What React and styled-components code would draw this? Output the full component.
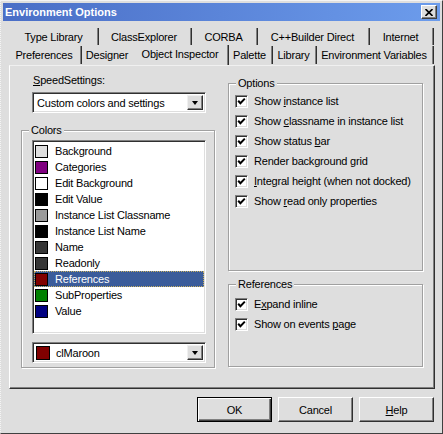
import styled, { createGlobalStyle } from "styled-components";

const GlobalStyle = createGlobalStyle`
  body {
    margin: 0;
    background: #dedede;
  }
  * {
    box-sizing: border-box;
  }
`;

const FACE = "#dedede";

const Window = styled.div`
  width: 443px;
  height: 434px;
  padding: 3px;
  background: ${FACE};
  font-family: "Liberation Sans", Arial, sans-serif;
  font-size: 11px;
  letter-spacing: -0.2px;
  color: #000;
  border-left: 1px dotted #f4f4f4;
  border-top: 1px solid #f4f4f4;
  border-right: 1px solid #404040;
  border-bottom: 1px solid #404040;
  display: flex;
  flex-direction: column;
  overflow: hidden;
`;

const TitleBar = styled.div`
  height: 18px;
  margin: -1px -1px 0 -1px;
  background: linear-gradient(to right, #4a6ec6, #6c9cec);
  display: flex;
  align-items: center;
  justify-content: space-between;
  padding: 0 3px 0 2px;
`;

const Title = styled.span`
  color: #fff;
  font-weight: bold;
  font-size: 11px;
  letter-spacing: 0;
`;

const CloseButton = styled.div`
  width: 16px;
  height: 14px;
  background: ${FACE};
  border-top: 1px solid #fff;
  border-left: 1px solid #fff;
  border-right: 1px solid #404040;
  border-bottom: 1px solid #404040;
  box-shadow: inset -1px -1px 0 #808080;
  display: flex;
  align-items: center;
  justify-content: center;
`;

const TabRows = styled.div`
  margin-top: 7px;
  display: flex;
  flex-direction: column;
`;

const TabRow = styled.div`
  display: flex;
  height: ${(p) => p.$h}px;
  padding-left: ${(p) => p.$indent}px;
`;

const Tab = styled.div`
  width: ${(p) => p.$w}px;
  display: flex;
  align-items: center;
  justify-content: center;
  padding-bottom: ${(p) => (p.$active ? 3 : 0)}px;
  margin-top: ${(p) => (p.$active ? -1 : 0)}px;
  border-right: ${(p) => (p.$sep ? "1px solid #303030" : "none")};
  box-shadow: ${(p) => (p.$sep ? "inset -1px 0 0 #808080" : "none")};
  padding-right: 2px;
  white-space: nowrap;
  margin-bottom: ${(p) => (p.$active ? -1 : 1)}px;
`;

const Page = styled.div`
  margin-left: 5px;
  width: 426px;
  height: 324px;
  border-left: 1px solid #fff;
  border-top: 1px solid #f0f0f0;
  border-right: 1px solid #303030;
  border-bottom: 1px solid #303030;
  box-shadow: inset -1px -1px 0 #808080;
  display: flex;
  gap: 13px;
  padding: 0 0 0 11px;
`;

const LeftColumn = styled.div`
  width: 194px;
  display: flex;
  flex-direction: column;
  padding-top: 8px;
`;

const RightColumn = styled.div`
  width: 195px;
  display: flex;
  flex-direction: column;
  padding-top: 17px;
  gap: 13px;
`;

const FieldLabel = styled.div`
  height: 13px;
  line-height: 13px;
  margin-left: 12px;
`;

const GroupBox = styled.div`
  position: relative;
  height: ${(p) => p.$h}px;
  margin-top: ${(p) => p.$top || 0}px;
  border: 1px solid #a0a0a0;
  box-shadow: 1px 1px 0 #fff, inset 1px 1px 0 #fff;
  padding: ${(p) => p.$pad};
`;

const GroupLegend = styled.span`
  position: absolute;
  top: -7px;
  left: 7px;
  padding: 0 2px;
  background: ${FACE};
  line-height: 13px;
`;

const Sunken = styled.div`
  background: #fff;
  border-top: 1px solid #808080;
  border-left: 1px solid #808080;
  border-right: 1px solid #fff;
  border-bottom: 1px solid #fff;
  box-shadow: inset 1px 1px 0 #303030, inset -1px -1px 0 ${FACE};
`;

const Combo = styled(Sunken)`
  width: 174px;
  height: ${(p) => p.$h}px;
  margin-left: ${(p) => p.$ml || 0}px;
  margin-top: ${(p) => p.$mt || 0}px;
  display: flex;
  align-items: center;
  padding: 2px;
`;

const ComboText = styled.div`
  flex: 1;
  display: flex;
  align-items: center;
  gap: 6px;
  padding-left: ${(p) => p.$pl}px;
`;

const DropButton = styled.div`
  width: 16px;
  height: 100%;
  background: ${FACE};
  border-top: 1px solid #f0f0f0;
  border-left: 1px solid #f0f0f0;
  border-right: 1px solid #303030;
  border-bottom: 1px solid #303030;
  box-shadow: inset -1px -1px 0 #808080;
  display: flex;
  align-items: center;
  justify-content: center;
`;

const Arrow = styled.div`
  width: 0;
  height: 0;
  border-left: 3.5px solid transparent;
  border-right: 3.5px solid transparent;
  border-top: 4px solid #000;
`;

const ListBox = styled(Sunken)`
  width: 174px;
  height: 194px;
  padding: 2px 1px;
`;

const ListItem = styled.div`
  height: 16px;
  display: flex;
  align-items: center;
  gap: 7px;
  padding-left: 1px;
  background: ${(p) => (p.$selected ? "#3b5c9a" : "transparent")};
  color: ${(p) => (p.$selected ? "#fff" : "#000")};
  outline: ${(p) => (p.$selected ? "1px dotted #c8b060" : "none")};
  outline-offset: -1px;
`;

const Swatch = styled.span`
  width: ${(p) => p.$size}px;
  height: ${(p) => p.$size}px;
  background: ${(p) => p.$color};
  border: 1px solid #000;
  flex: none;
`;

const CheckRow = styled.div`
  height: 20px;
  display: flex;
  align-items: center;
  gap: 6px;
  padding-left: 6px;
`;

const CheckBox = styled.span`
  width: 13px;
  height: 13px;
  flex: none;
  background: #fff;
  border-top: 1px solid #808080;
  border-left: 1px solid #808080;
  border-right: 1px solid #fff;
  border-bottom: 1px solid #fff;
  box-shadow: inset 1px 1px 0 #303030, inset -1px -1px 0 ${FACE};
  display: flex;
  align-items: center;
  justify-content: center;
`;

const ButtonRow = styled.div`
  display: flex;
  justify-content: flex-end;
  gap: 6px;
  margin-top: 8px;
  margin-right: 5px;
`;

const Button = styled.div`
  width: 75px;
  height: 25px;
  background: ${FACE};
  display: flex;
  align-items: center;
  justify-content: center;
  border-top: 1px solid #fff;
  border-left: 1px solid #fff;
  border-right: 1px solid #303030;
  border-bottom: 1px solid #303030;
  box-shadow: inset -1px -1px 0 #808080;
  ${(p) =>
    p.$default &&
    `
    border: 1px solid #000;
    box-shadow: inset 1px 1px 0 #fff, inset -1px -1px 0 #404040, inset -2px -2px 0 #808080;
  `}
`;

const tabsTop = [
  { label: "Type Library", w: 88 },
  { label: "ClassExplorer", w: 93 },
  { label: "CORBA", w: 66 },
  { label: "C++Builder Direct", w: 112 },
  { label: "Internet", w: 64 },
];

const tabsBottom = [
  { label: "Preferences", w: 73, sep: true },
  { label: "Designer", w: 52, sep: false },
  { label: "Object Inspector", w: 95, sep: true, active: true },
  { label: "Palette", w: 44, sep: true },
  { label: "Library", w: 44, sep: true },
  { label: "Environment Variables", w: 117, sep: true },
];

const colors = [
  { name: "Background", color: "#dedede" },
  { name: "Categories", color: "#800080" },
  { name: "Edit Background", color: "#ffffff" },
  { name: "Edit Value", color: "#000000" },
  { name: "Instance List Classname", color: "#9a9a9a" },
  { name: "Instance List Name", color: "#000000" },
  { name: "Name", color: "#363636" },
  { name: "Readonly", color: "#363636" },
  { name: "References", color: "#800000", selected: true },
  { name: "SubProperties", color: "#008000" },
  { name: "Value", color: "#000080" },
];

function Check() {
  return (
    <svg width="9" height="9" viewBox="0 0 9 9">
      <polyline points="1.2,3.8 3.4,6.2 7.8,1.6" fill="none" stroke="#000" strokeWidth="2" />
    </svg>
  );
}

function Option({ children }) {
  return (
    <CheckRow>
      <CheckBox>
        <Check />
      </CheckBox>
      <span>{children}</span>
    </CheckRow>
  );
}

export default function App() {
  return (
    <>
      <GlobalStyle />
      <Window>
        <TitleBar>
          <Title>Environment Options</Title>
          <CloseButton>
            <svg width="8" height="7" viewBox="0 0 8 7">
              <path d="M0.5 0 L7.5 7 M7.5 0 L0.5 7" stroke="#000" strokeWidth="1.6" />
            </svg>
          </CloseButton>
        </TitleBar>

        <TabRows>
          <TabRow $h={18} $indent={7}>
            {tabsTop.map((t) => (
              <Tab key={t.label} $w={t.w} $sep>
                {t.label}
              </Tab>
            ))}
          </TabRow>
          <TabRow $h={19} $indent={5}>
            {tabsBottom.map((t) => (
              <Tab key={t.label} $w={t.w} $sep={t.sep} $active={t.active}>
                {t.label}
              </Tab>
            ))}
          </TabRow>
        </TabRows>

        <Page>
          <LeftColumn>
            <FieldLabel>
              <u>S</u>peedSettings:
            </FieldLabel>
            <Combo $h={21} $ml={11} $mt={5}>
              <ComboText $pl={2}>Custom colors and settings</ComboText>
              <DropButton>
                <Arrow />
              </DropButton>
            </Combo>
            <GroupBox $h={238} $top={17} $pad="9px 0 0 10px">
              <GroupLegend>Colors</GroupLegend>
              <ListBox>
                {colors.map((c) => (
                  <ListItem key={c.name} $selected={c.selected}>
                    <Swatch $size={13} $color={c.color} />
                    <span>{c.name}</span>
                  </ListItem>
                ))}
              </ListBox>
              <Combo $h={21} $mt={8}>
                <ComboText $pl={1}>
                  <Swatch $size={14} $color="#800000" />
                  clMaroon
                </ComboText>
                <DropButton>
                  <Arrow />
                </DropButton>
              </Combo>
            </GroupBox>
          </LeftColumn>

          <RightColumn>
            <GroupBox $h={188} $pad="7px 0 0 0">
              <GroupLegend>Options</GroupLegend>
              <Option>
                Show <u>i</u>nstance list
              </Option>
              <Option>
                Show <u>c</u>lassname in instance list
              </Option>
              <Option>
                Show status <u>b</u>ar
              </Option>
              <Option>
                Render background <u>g</u>rid
              </Option>
              <Option>
                <u>I</u>ntegral height (when not docked)
              </Option>
              <Option>
                Show <u>r</u>ead only properties
              </Option>
            </GroupBox>
            <GroupBox $h={83} $pad="9px 0 0 0">
              <GroupLegend>References</GroupLegend>
              <Option>
                E<u>x</u>pand inline
              </Option>
              <Option>
                Show on events <u>p</u>age
              </Option>
            </GroupBox>
          </RightColumn>
        </Page>

        <ButtonRow>
          <Button $default>OK</Button>
          <Button>Cancel</Button>
          <Button>
            <span>
              <u>H</u>elp
            </span>
          </Button>
        </ButtonRow>
      </Window>
    </>
  );
}
